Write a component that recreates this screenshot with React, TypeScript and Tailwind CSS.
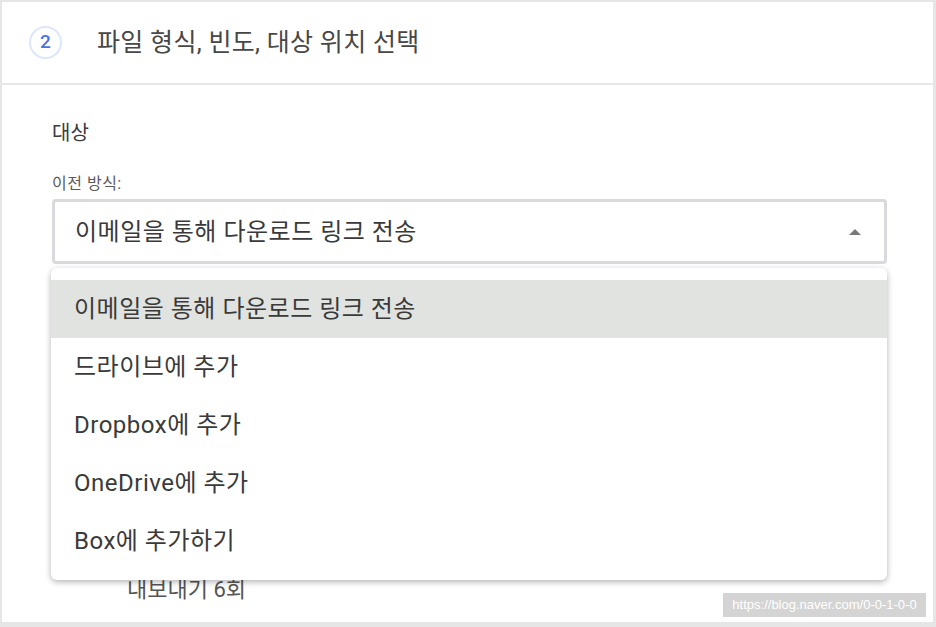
const font = "font-['Roboto','Noto_Sans_CJK_KR',sans-serif]"

const options = [
  '이메일을 통해 다운로드 링크 전송',
  '드라이브에 추가',
  'Dropbox에 추가',
  'OneDrive에 추가',
  'Box에 추가하기',
]

export default function App() {
  return (
    <div className={`relative w-[936px] h-[627px] bg-[#e6e6e6] pt-[2px] pl-[2px] pr-[3px] pb-[5px] ${font}`}>
      <div className="flex h-full flex-col bg-white">
        {/* Step header */}
        <div className="flex h-[83px] shrink-0 items-center border-b-2 border-[#e8e8e8] pl-[27px]">
          <div className="flex h-[33px] w-[33px] items-center justify-center rounded-full border-2 border-[#dde7fc] text-[19px] font-medium text-[#4b72e3]">
            2
          </div>
          <div className="ml-[35px] text-[25px] leading-[32px] tracking-[0.3px] text-[#474747]">파일 형식, 빈도, 대상 위치 선택</div>
        </div>

        {/* Body */}
        <div className="relative flex-1 pl-[50px] pr-[46px] pt-[34px]">
          <div className="text-[20px] leading-[28px] text-[#3c3c3c]">대상</div>
          <div className="mt-[26px] text-[16px] leading-[22px] tracking-[0.5px] text-[#5a5a5a]">이전 방식:</div>
          <div className="mt-[4px] flex h-[65px] items-center justify-between rounded-[4px] border-[3px] border-[#d9dadd] pl-[20px] pr-[22px]">
            <span className="text-[24px] tracking-[0.5px] text-[#3a3a3a]">이메일을 통해 다운로드 링크 전송</span>
            <svg width="14" height="8" viewBox="0 0 14 8">
              <path d="M1 7 L7 1 L13 7 Z" fill="#7a7a7a" />
            </svg>
          </div>
          <div className="mt-[312px] pl-[75px] text-[22px] leading-[28px] text-[#555]">내보내기 6회</div>

          {/* Open dropdown menu */}
          <div className="absolute left-[49px] top-[183px] w-[836px] rounded-[6px] bg-white pt-[12px] pb-[10px] shadow-[0_2px_6px_rgba(0,0,0,0.3)]">
            {options.map((o, i) => (
              <div
                key={o}
                className={`flex h-[58px] items-center pl-[23px] text-[24px] tracking-[0.5px] text-[#3a3a3a] ${i === 0 ? 'bg-[#e1e3e0]' : ''}`}
              >
                {o}
              </div>
            ))}
          </div>
        </div>
      </div>

      <div className="absolute right-[10px] bottom-[10px] flex h-[24px] w-[203px] items-center justify-center bg-[#d4d4d4] font-['Liberation_Sans',sans-serif] text-[13px] text-white">
        https://blog.naver.com/0-0-1-0-0
      </div>
    </div>
  )
}
